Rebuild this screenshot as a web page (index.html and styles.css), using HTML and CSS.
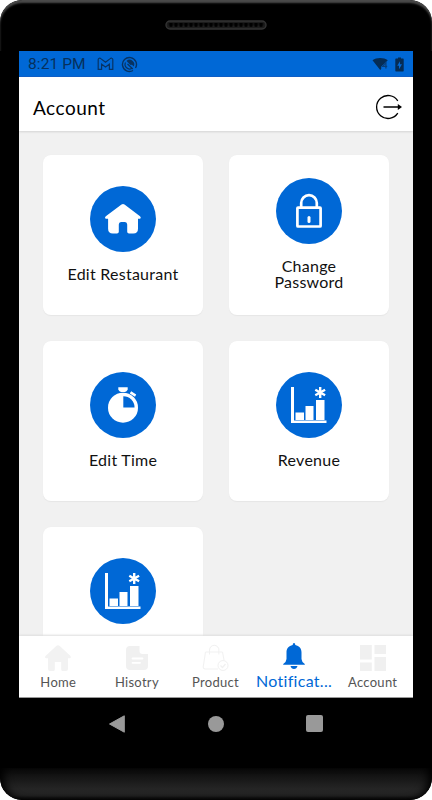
FILE: index.html
```
<!DOCTYPE html>
<html lang="en">
<head>
<meta charset="UTF-8" />
<meta name="viewport" content="width=device-width, initial-scale=1.0"/>
<title>Account</title>
<link rel="stylesheet" href="styles.css">
</head>
<body>
<svg class="defs">
  <symbol id="chart" viewBox="0 0 66 66">
    <path d="M15 15h3v33.5h32.500v2.500H15z M19.500 40.500h8.500v7.500h-8.500z M29.500 34h8v14h-8z M40 28h8.500v20H40z" fill="#fff"/>
    <path d="M44.200 15v11 M39.300 17.800l9.800 5.500 M49.100 17.800l-9.800 5.500" stroke="#fff" stroke-width="2.400"/>
  </symbol>
  <pattern id="holes" width="5" height="6" patternUnits="userSpaceOnUse">
    <path d="M.6 0v2a1.900 2 0 0 0 3.800 0V0z" fill="#000"/>
  </pattern>
</svg>
<div class="phone">
  <div class="top-bezel">
    <svg class="speaker" width="102" height="10" viewBox="0 0 102 10">
      <rect x="1" y="1" width="100" height="8" rx="4" fill="#1c1c1c" stroke="#333" stroke-width="1.400"/>
      <g transform="translate(3.500 3)"><rect width="95" height="5" fill="url(#holes)"/></g>
    </svg>
  </div>

  <div class="screen">
    <div class="status-bar">
      <span class="time">8:21 PM</span>
      <svg width="17" height="14" viewBox="0 0 17 14" fill="none" stroke="#073363" stroke-width="1.200">
        <path d="M1.200 12.300V2.600C1.200 1 3 .9 3.800 1.600L8.500 5.300l4.700-3.700c.8-.7 2.600-.6 2.600 1v9.700h-3.400V7.200L8.500 10 4.600 7.200v5.100z"/>
      </svg>
      <svg class="sync-icon" width="17" height="17" viewBox="0 0 17 17">
        <path d="M12 14.500A7 7 0 1 1 14.500 12" fill="none" stroke="#073363" stroke-width="1.400"/>
        <path d="M11 12.200A4.500 4.500 0 0 1 4.500 6.500" fill="none" stroke="#073363" stroke-width="1.200"/>
        <path d="M5.500 5A4.600 4.600 0 0 1 12.700 10.500L11 8.800 9.500 9z" fill="#073363"/>
        <path d="M6.500 8l5.300 5" stroke="#073363" stroke-width="1.200"/>
      </svg>
      <div class="status-right">
        <svg width="17" height="14" viewBox="0 0 17 14">
          <path d="M.5 3.300C4.500.3 11.800.3 15.800 3.300L13.700 5.200 9.200 9.600V12L8.200 13z" fill="#052c55"/>
          <path d="M13.900 11.500V5.300L10.700 9.300H15.200" fill="none" stroke="#073f7d" stroke-width="1.300"/>
        </svg>
        <svg width="9" height="15" viewBox="0 0 9 15">
          <path d="M1 1.600h2V.5h3v1.100h2q.7 0 .7.7v11.400q0 .8-.7.8H1q-.7 0-.7-.8V2.300q0-.7.7-.7z" fill="#052c55"/>
          <path d="M5 4.300v3h2l-3 5v-3.500H2.200z" fill="#0068d6"/>
        </svg>
      </div>
    </div>

    <header>
      <h1>Account</h1>
      <svg width="28" height="26" viewBox="0 0 28 26">
        <path d="M22.800 6.800A11.500 11.500 0 1 0 22.800 19.200" fill="none" stroke="#000" stroke-width="1.300"/>
        <path d="M8.500 13H24" stroke="#000" stroke-width="1.600"/>
        <path d="M22.800 10.100L27 13l-4.200 2.900z"/>
      </svg>
    </header>

    <main>
      <div class="card">
        <svg class="icon" viewBox="0 0 66 66">
          <path d="M31.500 18.500q1.500-1 3 0L50 30.300q1.500 1.300.2 2.500H48v10q0 4.700-4.700 4.700H39q-1.800 0-1.800-1.800V38.500q0-2.500-2.200-2.500h-4q-2.200 0-2.200 2.500v7.200q0 1.800-1.800 1.800h-4.200q-4.700 0-4.700-4.700v-10h-2.500q-1.300-1.200.2-2.500z" fill="#fff"/>
        </svg>
        <p>Edit Restaurant</p>
      </div>
      <div class="card">
        <svg class="icon" viewBox="0 0 66 66" fill="none" stroke="#fff" stroke-width="2.700">
          <rect x="21.400" y="29.700" width="23.200" height="18.800" rx=".6"/>
          <path d="M25.200 29.500V25a7.800 7.800 0 0 1 15.600 0v4.500"/>
          <path d="M33 39.500v4" stroke-width="3" stroke-linecap="round"/>
        </svg>
        <p>Change<br>Password</p>
      </div>
      <div class="card">
        <svg class="icon" viewBox="0 0 66 66">
          <circle cx="33" cy="35.700" r="15" fill="#fff"/>
          <path d="M28.300 15.300h9.400v2.400q-1.500 2.300-3 2.300h-3.400q-1.500 0-3-2.300z M41.200 19.200l5 3.300-1.200 2.200-5.300-3.300z" fill="#fff"/>
          <path d="M33.300 24.200A11.300 11.300 0 0 1 44.600 35.500H33.300z" fill="#0068d6"/>
        </svg>
        <p>Edit Time</p>
      </div>
      <div class="card">
        <svg class="icon"><use href="#chart"/></svg>
        <p>Revenue</p>
      </div>
      <div class="card">
        <svg class="icon"><use href="#chart"/></svg>
        <p></p>
      </div>
    </main>

    <nav>
      <div class="tab">
        <svg viewBox="0 0 28 28" fill="#f2f2f2">
          <path d="M12.500 1.800q1.500-1.300 3 0L26.500 12q1.200 1.800-.7 2.300H24V25q0 2-2 2h-3.300q-1.500 0-1.500-1.500V18h-6.400v7.500q0 1.500-1.500 1.500H6q-2 0-2-2V14.300H2.200q-1.900-.5-.7-2.300z"/>
        </svg>
        <span>Home</span>
      </div>
      <div class="tab">
        <svg viewBox="0 0 28 28">
          <path d="M7 2h9.500v5q0 3 3 3H25v12q0 4-4 4H7q-4 0-4-4V6q0-4 4-4z" fill="#f0f0f0"/>
          <path d="M9.500 14.500h10M9.500 18.800h7.500" stroke="#fff" stroke-width="1.800" stroke-linecap="round"/>
        </svg>
        <span>Hisotry</span>
      </div>
      <div class="tab">
        <svg viewBox="0 0 28 28" fill="none" stroke="#f1f1f1" stroke-width="1">
          <path d="M17 25H4q-2 0-1.800-2L4.500 8h17l1.500 8M8.500 10.500V6a4.700 4.700 0 0 1 9.400 0v4.500"/>
          <circle cx="22" cy="21.500" r="5"/>
          <path d="M19.500 21.500l2 2 3-3.500" stroke-width="1.300"/>
        </svg>
        <span>Product</span>
      </div>
      <div class="tab active">
        <svg viewBox="0 0 28 28" fill="#0068d6">
          <path d="M14 1q1.300 0 1.300 2c4 .8 6.200 3.500 6.200 7.500v6.500q0 2.500 3.300 5v.8H3.200V22q3.300-2.500 3.300-5v-6.500C6.500 6.500 8.700 3.800 12.700 3q0-2 1.300-2z M10.500 24h7q-.8 3-3.500 3t-3.500-3z"/>
        </svg>
        <span>Notificat...</span>
      </div>
      <div class="tab">
        <svg viewBox="0 0 28 28" fill="#f0f0f0">
          <path d="M1 1h11.800v14.500H1z M15.500 1h11.500v9H15.500z M1 18.500h11.800V27H1z M15.500 13h11.500v14H15.500z"/>
        </svg>
        <span>Account</span>
      </div>
    </nav>
  </div>

  <div class="nav-keys">
    <svg width="18" height="20" viewBox="0 0 18 20"><path d="M1.500 10L16.300 1.800v16.400z" fill="#999" stroke="#999" stroke-linejoin="round"/></svg>
    <div class="home-key"></div>
    <div class="recent-key"></div>
  </div>
  <div class="chin"></div>
</div>
</body>
</html>
```

FILE: styles.css
```
body {
  margin: 0;
  background: #fff;
  font-family: Lato, sans-serif;
}

.defs {
  position: absolute;
  width: 0;
  height: 0;
}

.phone {
  width: 432px;
  height: 800px;
  display: flex;
  flex-direction: column;
  background: #000;
  border-radius: 22px;
  overflow: hidden;
}

.top-bezel {
  box-sizing: border-box;
  height: 51px;
  padding: 20px 1px 0 0;
  text-align: center;
  line-height: 0;
  border-radius: 22px 22px 0 0;
  box-shadow: inset 0 3px 2px #4a4a4a;
}

.screen {
  box-sizing: border-box;
  width: 394px;
  height: 647px;
  margin: 0 auto;
  display: flex;
  flex-direction: column;
  background: #f1f1f1;
  border-bottom: 1px solid #999;
  overflow: hidden;
}

.status-bar {
  box-sizing: border-box;
  height: 26px;
  flex-shrink: 0;
  display: flex;
  align-items: center;
  padding: 1px 9px 0;
  background: #0068d6;
  border-bottom: 1px solid #0055c4;
}

.time {
  width: 69px;
  font: 15.5px Roboto, sans-serif;
  letter-spacing: 0.1px;
  color: #06305c;
}

.sync-icon {
  margin-left: 7px;
}

.status-right {
  margin-left: auto;
  display: flex;
  align-items: center;
  gap: 6px;
}

header {
  box-sizing: border-box;
  height: 54px;
  flex-shrink: 0;
  display: flex;
  align-items: center;
  justify-content: space-between;
  padding: 6px 10px 0 14px;
  background: #fff;
  box-shadow: 0 1px 2px #d4d4d4;
}

header h1 {
  margin: 0;
  font-size: 19px;
  font-weight: normal;
  letter-spacing: 0.5px;
}

/* Account options */
main {
  flex: 1;
  min-height: 0;
  overflow: hidden;
  display: grid;
  grid-template-columns: 160px 160px;
  grid-auto-rows: 160px;
  gap: 26px;
  padding: 24px 24px 0;
}

.card {
  display: flex;
  flex-direction: column;
  align-items: center;
  justify-content: center;
  background: #fff;
  border-radius: 8px;
  box-shadow: 0 0.5px 1px #e6e6e6;
}

.icon {
  width: 66px;
  height: 66px;
  border-radius: 50%;
  background: #0068d6;
}

.card p {
  min-height: 16px;
  margin: 14px 0 3px;
  font-size: 16px;
  line-height: 16px;
  letter-spacing: 0.25px;
  text-align: center;
  color: #111;
}

/* Bottom tabs */
nav {
  height: 61px;
  flex-shrink: 0;
  display: flex;
  padding-right: 1px;
  background: #fff;
  box-shadow: 0 -1px 2px #dedede;
}

.tab {
  flex: 1;
  min-width: 0;
  display: flex;
  flex-direction: column;
  align-items: center;
  padding-top: 8px;
  font-size: 13px;
  line-height: 16px;
  letter-spacing: 0.3px;
  color: #555;
}

.tab svg {
  width: 28px;
  height: 28px;
  margin-bottom: 2px;
}

.tab.active {
  padding-top: 6px;
  font-size: 16px;
  line-height: 18px;
  letter-spacing: 0.3px;
  white-space: nowrap;
  color: #0068d6;
}

.nav-keys {
  height: 51px;
  display: flex;
  justify-content: center;
  align-items: center;
  gap: 82px;
  padding-right: 2px;
}

.home-key {
  width: 16px;
  height: 16px;
  border-radius: 50%;
  background: #999;
}

.recent-key {
  width: 17px;
  height: 17px;
  border-radius: 2px;
  background: #999;
}

.chin {
  height: 32px;
  margin-top: auto;
  border-radius: 0 0 22px 22px;
  background: linear-gradient(#090909, #252525 65%, #222 85%, #050505);
  box-shadow: inset 8px 0 8px -4px #000, inset -8px 0 8px -4px #000;
}
```
